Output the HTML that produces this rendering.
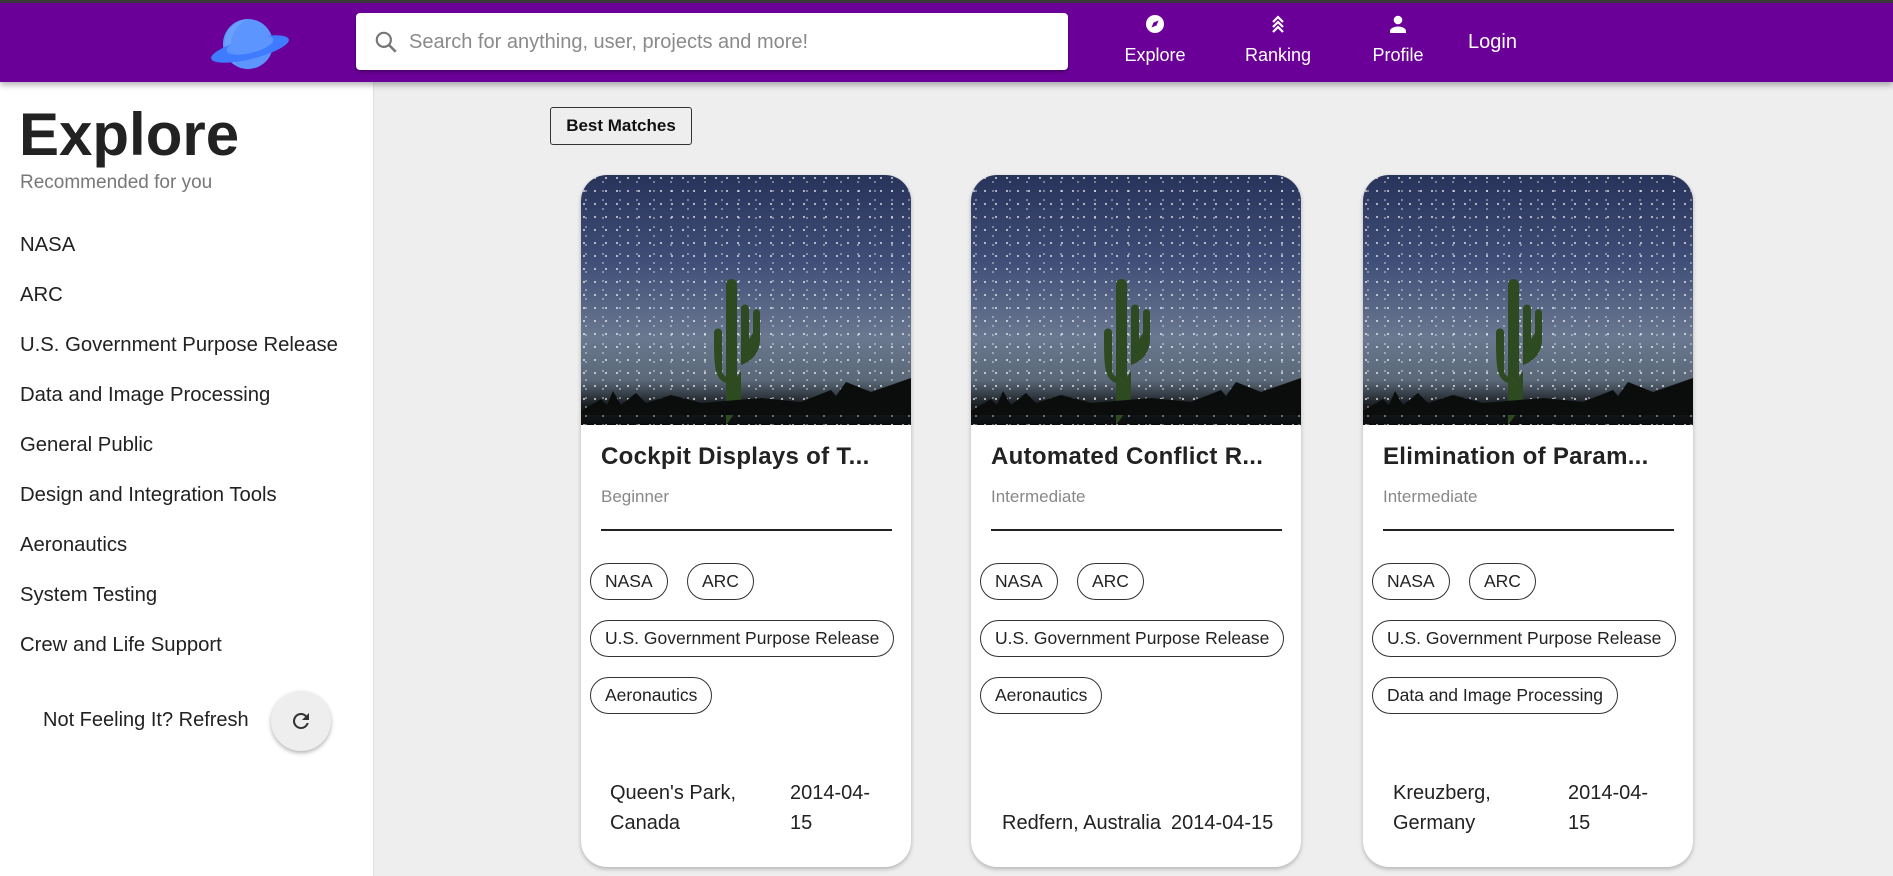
<!DOCTYPE html>
<html><head><meta charset="utf-8"><style>
*{box-sizing:border-box;margin:0;padding:0}
body{width:1893px;height:876px;overflow:hidden;background:#eeeeee;font-family:"Liberation Sans",Arial,sans-serif;position:relative;color:#222}
.top{position:absolute;left:0;top:0;width:1893px;height:3px;background:#3a3a3a}
.hdr{position:absolute;left:0;top:3px;width:1893px;height:79px;background:#6a0098;box-shadow:0 3px 6px rgba(0,0,0,.3);z-index:2}
.search{position:absolute;left:356px;top:10px;width:712px;height:57px;background:#fff;border-radius:4px;box-shadow:0 2px 3px rgba(0,0,0,.3)}
.search span{position:absolute;left:53px;top:18px;font-size:20px;color:#8a8a8a}
.nav{position:absolute;color:#fff;font-size:18px;text-align:center}
.side{position:absolute;left:0;top:82px;width:374px;height:794px;background:#fff;border-right:1px solid #e0e0e0}
h1{position:absolute;left:19px;top:100px;font-size:60px;font-weight:bold;color:#222}
.rec{position:absolute;left:20px;top:172px;font-size:19px;color:#777}
.item{position:absolute;left:20px;font-size:20.3px;color:#222}
.refresh{position:absolute;left:43px;top:709px;font-size:20px;color:#222}
.rbtn{position:absolute;left:271px;top:691px;width:60px;height:60px;border-radius:50%;background:#eeeeee;box-shadow:0 2px 4px rgba(0,0,0,.3)}
.bm{position:absolute;left:550px;top:107px;width:142px;height:38px;border:1px solid #333;border-radius:3px;font-size:17px;font-weight:bold;text-align:center;line-height:36px;color:#111}
.card{position:absolute;top:175px;width:330px;height:692px;background:#fff;border-radius:26px;overflow:hidden;box-shadow:0 2px 4px rgba(0,0,0,.25)}
.img{position:absolute;left:0;top:0;width:330px;height:250px;background:
radial-gradient(circle at 3px 3px,rgba(255,255,255,.7) 0.8px,transparent 1.3px) 0 0/11px 13px,
radial-gradient(circle at 5px 7px,rgba(255,255,255,.5) 0.7px,transparent 1.2px) 0 0/17px 9px,
linear-gradient(180deg,#28335a 0%,#404f78 35%,#6a7890 65%,#5a6878 82%,#1a1e22 92%,#0a0c0e 100%)}
.title{position:absolute;left:20px;top:268px;font-size:24px;font-weight:bold;color:#222;white-space:nowrap;letter-spacing:.3px}
.lvl{position:absolute;left:20px;top:312px;font-size:17px;color:#888}
.line{position:absolute;left:20px;top:354px;width:291px;height:2px;background:#222}
.chip{position:absolute;height:37px;border:1px solid #333;border-radius:19px;font-size:17.5px;line-height:35px;padding:0 14px;color:#222;white-space:nowrap}
.ft{position:absolute;font-size:20px;color:#222;line-height:30px}
</style></head><body>
<div class="top"></div>
<div class="hdr">
<svg style="position:absolute;left:205px;top:8px" width="90" height="64" viewBox="0 0 90 64">
<circle cx="43" cy="33" r="25" fill="#5d95ff"/>
<path d="M43 8a25 25 0 0 0-10 47a30 30 0 0 1 10-47z" fill="#6aa0ff"/>
<ellipse cx="45" cy="38" rx="40" ry="10" transform="rotate(-14 45 38)" fill="#3f7bff"/>
<ellipse cx="45" cy="34" rx="24" ry="8" transform="rotate(-14 45 34)" fill="#5d95ff"/>
</svg>
<div class="search">
<svg style="position:absolute;left:17px;top:16px" width="26" height="26" viewBox="0 0 24 24"><circle cx="10" cy="10" r="6.5" stroke="#777" stroke-width="2" fill="none"/><path d="M15 15l6 6" stroke="#777" stroke-width="2.4"/></svg>
<span>Search for anything, user, projects and more!</span></div>
<div class="nav" style="left:1120px;top:11px;width:70px">
<svg width="20" height="20" viewBox="0 0 20 20"><circle cx="10" cy="10" r="9" fill="#fff"/><path d="M13.5 6.5L11.5 11.5 6.5 13.5 8.5 8.5z" fill="#6a0098"/></svg><div style="margin-top:6px">Explore</div></div>
<div class="nav" style="left:1240px;top:11px;width:76px">
<svg width="20" height="20" viewBox="0 0 20 20"><path d="M5 8l5-5 5 5M5 13l5-5 5 5M5 18l5-5 5 5" stroke="#fff" stroke-width="2.2" fill="none"/></svg><div style="margin-top:6px">Ranking</div></div>
<div class="nav" style="left:1365px;top:11px;width:66px">
<svg width="20" height="20" viewBox="0 0 20 20"><circle cx="10" cy="6" r="4.3" fill="#fff"/><path d="M2 19v-2c0-3 5-4.5 8-4.5s8 1.5 8 4.5v2z" fill="#fff"/></svg><div style="margin-top:6px">Profile</div></div>
<div class="nav" style="left:1468px;top:28px;font-size:20px">Login</div>
</div>
<div class="side"></div>
<h1>Explore</h1>
<div class="rec">Recommended for you</div>
<div class="item" style="top:234px">NASA</div>
<div class="item" style="top:284px">ARC</div>
<div class="item" style="top:334px">U.S. Government Purpose Release</div>
<div class="item" style="top:384px">Data and Image Processing</div>
<div class="item" style="top:434px">General Public</div>
<div class="item" style="top:484px">Design and Integration Tools</div>
<div class="item" style="top:534px">Aeronautics</div>
<div class="item" style="top:584px">System Testing</div>
<div class="item" style="top:634px">Crew and Life Support</div>
<div class="refresh">Not Feeling It? Refresh</div>
<div class="rbtn"><svg style="position:absolute;left:18px;top:18px" width="24" height="24" viewBox="0 0 24 24"><path d="M17.65 6.35A7.96 7.96 0 0 0 12 4a8 8 0 1 0 7.73 10h-2.08A6 6 0 1 1 12 6c1.66 0 3.14.69 4.22 1.78L13 11h7V4z" fill="#333"/></svg></div>
<div class="bm">Best Matches</div>

<div class="card" style="left:581px">
<div class="img"><svg width="330" height="250" viewBox="0 0 330 250"><path d="M145 250v-42c-12-4-12-18-12-50c0-6 8-6 8 0v40l4 4V110c0-8 11-8 11 0v92l4-6v-62c0-6 8-6 8 0v30l4-6v-20c0-5 7-5 7 0v26c0 14-8 22-19 26v40z" fill="#2e4a20"/><path d="M0 236l20-12 6 6 6-14 8 14 15-12 10 10 25-8 30 8 60-5 40 4 30-12 5 6 10-14 25 10 40-14v37H0z" fill="#0b0d0c"/></svg></div>
<div class="title">Cockpit Displays of T...</div><div class="lvl">Beginner</div><div class="line"></div>
<div class="chip" style="left:9px;top:388px">NASA</div>
<div class="chip" style="left:106px;top:388px">ARC</div>
<div class="chip" style="left:9px;top:445px">U.S. Government Purpose Release</div>
<div class="chip" style="left:9px;top:502px">Aeronautics</div>
<div class="ft" style="left:29px;top:603px">Queen's Park,<br>Canada</div>
<div class="ft" style="left:209px;top:603px">2014-04-<br>15</div>
</div>
<div class="card" style="left:971px">
<div class="img"><svg width="330" height="250" viewBox="0 0 330 250"><path d="M145 250v-42c-12-4-12-18-12-50c0-6 8-6 8 0v40l4 4V110c0-8 11-8 11 0v92l4-6v-62c0-6 8-6 8 0v30l4-6v-20c0-5 7-5 7 0v26c0 14-8 22-19 26v40z" fill="#2e4a20"/><path d="M0 236l20-12 6 6 6-14 8 14 15-12 10 10 25-8 30 8 60-5 40 4 30-12 5 6 10-14 25 10 40-14v37H0z" fill="#0b0d0c"/></svg></div>
<div class="title">Automated Conflict R...</div><div class="lvl">Intermediate</div><div class="line"></div>
<div class="chip" style="left:9px;top:388px">NASA</div>
<div class="chip" style="left:106px;top:388px">ARC</div>
<div class="chip" style="left:9px;top:445px">U.S. Government Purpose Release</div>
<div class="chip" style="left:9px;top:502px">Aeronautics</div>
<div class="ft" style="left:31px;top:633px">Redfern, Australia</div>
<div class="ft" style="left:200px;top:633px">2014-04-15</div>
</div>
<div class="card" style="left:1363px">
<div class="img"><svg width="330" height="250" viewBox="0 0 330 250"><path d="M145 250v-42c-12-4-12-18-12-50c0-6 8-6 8 0v40l4 4V110c0-8 11-8 11 0v92l4-6v-62c0-6 8-6 8 0v30l4-6v-20c0-5 7-5 7 0v26c0 14-8 22-19 26v40z" fill="#2e4a20"/><path d="M0 236l20-12 6 6 6-14 8 14 15-12 10 10 25-8 30 8 60-5 40 4 30-12 5 6 10-14 25 10 40-14v37H0z" fill="#0b0d0c"/></svg></div>
<div class="title">Elimination of Param...</div><div class="lvl">Intermediate</div><div class="line"></div>
<div class="chip" style="left:9px;top:388px">NASA</div>
<div class="chip" style="left:106px;top:388px">ARC</div>
<div class="chip" style="left:9px;top:445px">U.S. Government Purpose Release</div>
<div class="chip" style="left:9px;top:502px">Data and Image Processing</div>
<div class="ft" style="left:30px;top:603px">Kreuzberg,<br>Germany</div>
<div class="ft" style="left:205px;top:603px">2014-04-<br>15</div>
</div>
</body></html>
